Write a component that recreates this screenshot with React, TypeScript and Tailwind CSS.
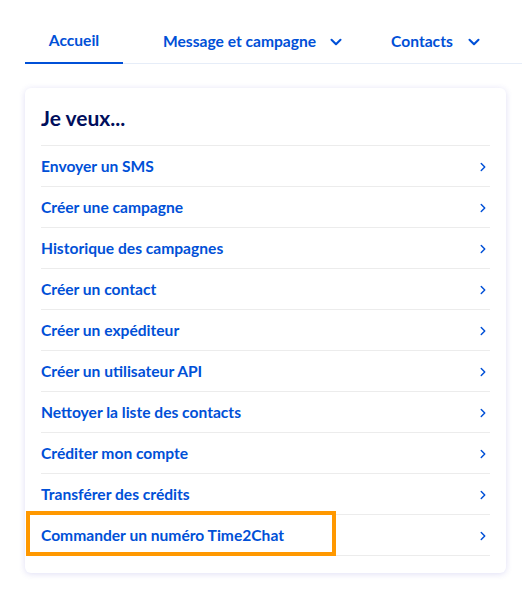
import { ChevronDown, ChevronRight } from 'lucide-react';

const actions = [
  'Envoyer un SMS',
  'Créer une campagne',
  'Historique des campagnes',
  'Créer un contact',
  'Créer un expéditeur',
  'Créer un utilisateur API',
  'Nettoyer la liste des contacts',
  'Créditer mon compte',
  'Transférer des crédits',
  'Commander un numéro Time2Chat',
];

export default function App() {
  return (
    <div className="w-[522px] h-[589px] bg-white pl-[25px] pt-[24px] font-['Lato',sans-serif]">
      <nav className="flex h-[40px] border-b border-[#e6edf8] text-[15.6px] font-bold text-[#0050d7]">
        <div className="-mb-px flex w-[98px] items-center justify-center border-b-2 border-[#0050d7] pb-[5px]">
          Accueil
        </div>
        <div className="flex items-center gap-[11px] pb-[4px] pl-[40px]">
          <span>Message et campagne</span>
          <ChevronDown className="size-[18px]" strokeWidth={2.75} />
        </div>
        <div className="flex items-center gap-[12px] pb-[4px] pl-[46px]">
          <span>Contacts</span>
          <ChevronDown className="size-[18px]" strokeWidth={2.75} />
        </div>
      </nav>

      <section className="relative mt-[24px] w-[481px] rounded-md bg-white px-4 pt-4 pb-[17px] shadow-[0_1px_6px_rgba(80,70,200,0.18)]">
        <h2 className="h-[28px] text-[21px] font-bold leading-[28px] text-[#000e5c]">Je veux...</h2>
        <ul className="mt-[13px] border-t border-[#ececec]">
          {actions.map((label) => (
            <li
              key={label}
              className="flex h-[41px] items-center justify-between border-b border-[#ececec] pt-[2px] text-[15.6px] font-bold text-[#0050d7]"
            >
              <span>{label}</span>
              <ChevronRight className="size-[14px]" strokeWidth={2.5} />
            </li>
          ))}
        </ul>
        <div className="pointer-events-none absolute left-[1px] top-[423px] h-[45px] w-[310px] border-4 border-[#ff9800]" />
      </section>
    </div>
  );
}
